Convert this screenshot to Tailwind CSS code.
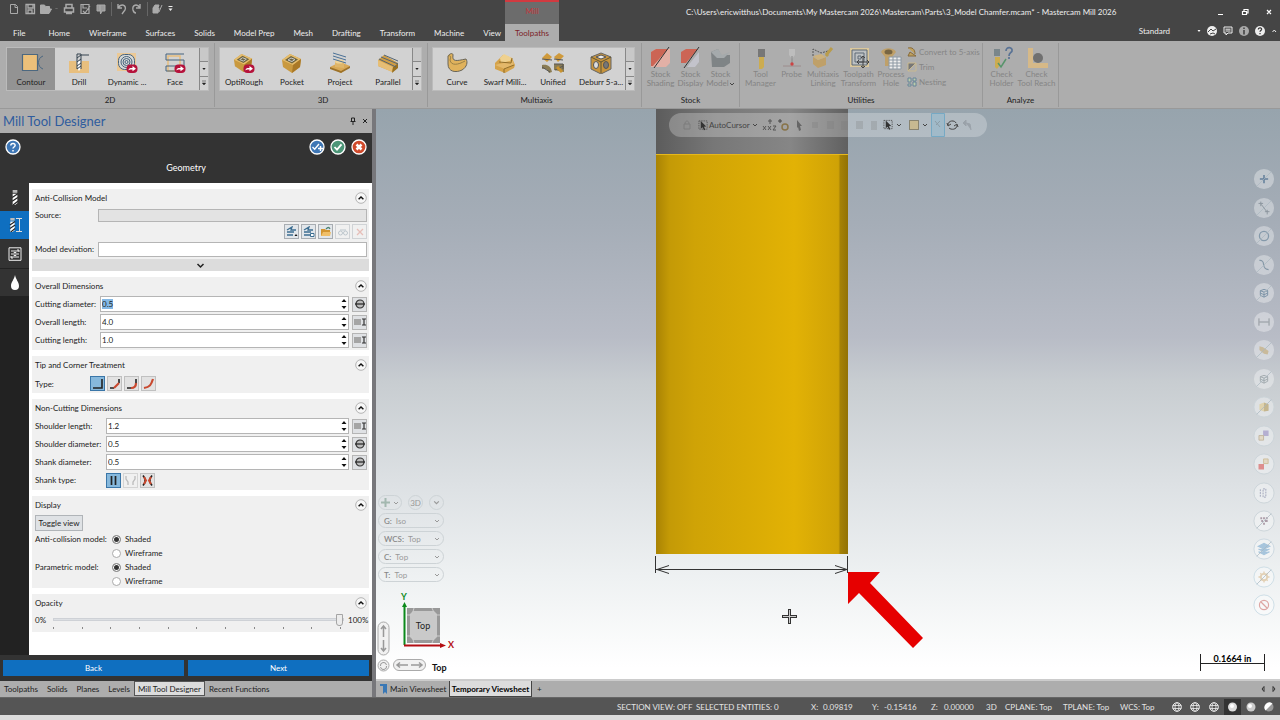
<!DOCTYPE html>
<html lang="en">
<head>
    <meta charset="UTF-8">
    <meta name="viewport" content="width=device-width, initial-scale=1.0">
    <title>Mastercam Mill 2026</title>
    <script src="https://cdn.jsdelivr.net/npm/@tailwindcss/browser@4"></script>
</head>
<body class="h-screen flex flex-col overflow-hidden bg-[#dcdcdc] font-[Lato,'Noto_Sans',sans-serif] text-[8px] leading-[10px] text-[#222]">

    <!-- shared icons -->
    <svg class="hidden">
        <symbol id="down" viewBox="0 0 6 6"><path d="M1 2l2 2 2-2" fill="none" stroke="currentColor"/></symbol>
        <symbol id="up" viewBox="0 0 12 12"><circle cx="6" cy="6" r="5.3" fill="#f7f7f7" stroke="#999" stroke-width=".7"/><path d="M3.600 7.200L6 5l2.400 2.200" fill="none" stroke="#111" stroke-width="1.500"/></symbol>
        <symbol id="caret" viewBox="0 0 6 6"><path d="M1.300 2h3.400L3 4z" fill="currentColor"/></symbol>
        <symbol id="more" viewBox="0 0 6 6"><path d="M1 1h4M1.300 3h3.400L3 5z" fill="currentColor" stroke="currentColor" stroke-width=".5"/></symbol>
        <symbol id="spin" viewBox="0 0 6 14"><path d="M.5 5L3 2l2.500 3zM.5 9L3 12l2.500-3z" fill="#111"/></symbol>
        <symbol id="diameter" viewBox="0 0 12 12"><circle cx="6" cy="6" r="4" fill="#bbb" stroke="#333" stroke-width="1.200"/><path d="M1 6h10" stroke="#222" stroke-width="1.200"/></symbol>
        <symbol id="length" viewBox="0 0 12 12"><path d="M0 3h7v6H0z" fill="#a5a5a5"/><path d="M8 3h4M8 9h4M10 3v6" stroke="#333" stroke-width="1.200"/></symbol>
        <symbol id="badge" viewBox="0 0 12 10"><rect x=".5" y=".5" width="11" height="8.500" rx="4" fill="#b5123b"/><path d="M2.500 6.500c0-2 1-2.500 4-2.500V2l3.500 2.700L6.500 7.300V5.500c-2 0-3-.2-4 1z" fill="#fff"/></symbol>
        <symbol id="arrowcursor" viewBox="0 0 12 12"><path d="M1 1h9v9H1z" fill="none" stroke="#555" stroke-dasharray="1.500 1"/><path d="M3 1l6 6-2.500.3L8 10.500l-1.500.7L5 8 3 9.500z" fill="#333"/></symbol>
        <symbol id="bit" viewBox="0 0 12 16"><path d="M3.500 0h5v3h-5z" fill="#bbb"/><path d="M3.500 4h5v10l-2.500 2h-2.500z" fill="#fff"/><path d="M3 8l6-4M3 12l6-4M4 16l5-4" stroke="#222" stroke-width="1.300"/></symbol>
        <symbol id="box" viewBox="0 0 22 22"><path d="M1 8l8-6 11 5-1 8-8 6-9-6z" fill="#c9993f"/><path d="M1 8l8-6 11 5-8 6z" fill="#e6bd6c"/><path d="M4 8l6-4 7 3.500-6 4z" fill="#6e6540"/><path d="M7 8l3-2 4 1.500-3 2z" fill="none" stroke="#ccc"/><path d="M12 13l8-6-1 8-8 6z" fill="#a97826"/></symbol>
        <symbol id="globe" viewBox="0 0 12 12"><circle cx="6" cy="6" r="4.300" fill="none" stroke="#eee"/><ellipse cx="6" cy="6" rx="2" ry="4.300" fill="none" stroke="#eee" stroke-width=".8"/><path d="M1.700 4.500h8.600M1.700 7.500h8.600" stroke="#eee" stroke-width=".8"/></symbol>
        <symbol id="cube" viewBox="0 0 12 12"><path d="M2 3.500L6 2l4 1.500v5L6 10.500l-4-2zM2 3.500l4 1.500 4-1.500M6 5v5.500M2 6l4 2 4-2" fill="none" stroke="currentColor"/></symbol>
        <symbol id="slash" viewBox="0 0 24 24"><path d="M4 20L20 4" stroke="#aab6be" stroke-width=".8"/></symbol>
    </svg>

    <header class="shrink-0">
        <div class="h-[41px] bg-[#454545] text-[#eee] flex justify-between">
            <div class="w-[505px] shrink-0 flex flex-col">
                <div class="h-[24px] flex items-start">
                    <svg class="w-[180px] h-[18px] ml-1" viewBox="0 0 180 18" fill="none" stroke="#aaa">
                        <path d="M6.500 4.500h5l2 2v7h-7zM11 4.500v3h3"/>
                        <path d="M22 4.500h8.500v9H22zM24 5v3h5V5M24 13v-3h4v3" stroke-width="1.300"/>
                        <path d="M36.500 5h4l1 1.500h4V9h-6l-2 4.500h-1zM37 13.500L39.500 9h8L45 13.500z" fill="#aaa"/><path d="M51.500 8l1 1 1-1" stroke="#777"/>
                        <path d="M62 8V4.500h6V8M60.500 8h9v4h-9zM62 13.500h6" stroke-width="1.500"/>
                        <path d="M77 4.500h8v9h-8zM79 5v3h4M79 11l2 2 5-7" stroke-width="1.200"/>
                        <path d="M93 5h3v6h-3zM96 5h5v6h-3l-1.500 3z" fill="#999"/>
                        <path d="M107.500 2v14M143.500 2v14" stroke="#666"/>
                        <path d="M114 4v4h4M114 8c3-5 9-3 7 2l-3 4M136 4v4h-4M136 8c-3-5-8-3-7 2 .5 2 2 3 3 3" stroke-width="1.400"/>
                        <path d="M149 8l2-3h4l-1 3zM149 8v5h5l1-5M155 12l3-7" fill="#aaa"/>
                        <path d="M164.500 6.500h4" stroke="#eee"/><path d="M164.500 8.500h4l-2 2.500z" fill="#eee" stroke="none"/>
                    </svg>
                </div>
                <nav class="flex h-[17px] items-center pl-[13px] gap-[19px] whitespace-nowrap">
                    <a href="#" class="mr-[4px]">File</a><a href="#">Home</a><a href="#">Wireframe</a><a href="#">Surfaces</a><a href="#">Solids</a><a href="#">Model Prep</a><a href="#">Mesh</a><a href="#">Drafting</a><a href="#">Transform</a><a href="#">Machine</a><a href="#">View</a>
                </nav>
            </div>
            <div class="w-[54px] mr-auto flex flex-col text-center">
                <div class="h-[24px] bg-[#6c6c6c] border-t-2 border-[#d13a40] text-[#c8383e] pt-[4px]">Mill</div>
                <a href="#" class="h-[17px] bg-[#adadad] text-[#7b2227] pt-[4px]">Toolpaths</a>
            </div>
            <div class="w-[594px] flex flex-col">
                <div class="h-[23px] flex items-center justify-between pr-2">
                    <span class="whitespace-nowrap">C:\Users\ericwitthus\Documents\My Mastercam 2026\Mastercam\Parts\3_Model Chamfer.mcam* - Mastercam Mill 2026</span>
                    <svg class="w-[56px] h-[10px]" viewBox="0 0 56 10" fill="none" stroke="#fff"><path d="M2 7.500h5M26.500 4.500h4v3h-4zM28 4.500V2.500h4v3.500h-1M51 3l4 4M55 3l-4 4" stroke-width="1.200"/></svg>
                </div>
                <div class="flex items-center justify-end h-[16px]">
                    <span class="mr-6">Standard</span>
                    <svg class="w-[86px] h-[14px]" viewBox="0 0 86 14">
                        <path d="M3.500 6h3L5 8z" fill="#fff"/>
                        <circle cx="18" cy="7" r="5" fill="#eee"/><path d="M14 8l3-3 2 2 3-2M16 10l3-1 2 1" stroke="#444" fill="none"/>
                        <path d="M30 3h8v6h-4l-2 2V9h-2zM31.500 5.200h5M31.500 7h5" fill="none" stroke="#eee"/>
                        <circle cx="50" cy="7" r="5" fill="#aaa"/><path d="M50 3.500v1.500M50 6v4.500" stroke="#444" stroke-width="1.600"/>
                        <circle cx="66" cy="7" r="5" fill="#eee"/><path d="M64.300 5.500c0-2.500 3.800-2 3.300 0-.3 1-1.600 1-1.600 2.300M66 9v1.300" fill="none" stroke="#333" stroke-width="1.200"/>
                        <path d="M78.500 8l1.800-2L82 8" fill="none" stroke="#eee"/>
                    </svg>
                </div>
            </div>
        </div>

        <!-- ribbon -->
        <div class="h-[68px] bg-[#adadad] border-b border-[#999] flex pt-[2px] pb-[1px] text-center">
            <section class="w-[215px] shrink-0 border-r border-[#999] pl-[6px] pt-1">
                <div class="w-[203px] h-[44px] flex bg-[#d2d2d2] border border-[#bbb]">
                    <button class="w-[48px] bg-[#939393] flex flex-col items-center pt-[4px] whitespace-nowrap"><svg class="w-[26px] h-[22px] shrink-0 mb-[3px]" viewBox="0 0 26 22"><path d="M4.500 2.500h15v16h-15z" fill="#ecc07a" stroke="#4c6880" stroke-width="1.200"/><path d="M25 4c-6 2-6 11 0 13" fill="none" stroke="#4c6880"/></svg>Contour</button>
                    <button class="w-[48px] flex flex-col items-center pt-[4px] whitespace-nowrap"><svg class="w-[26px] h-[22px] shrink-0 mb-[3px]" viewBox="0 0 26 22"><path d="M3 9h7l3 9 3-9h7v12H3z" fill="#e8bf7e"/><path d="M11 9h4v7l-2 3-2-3z" fill="#fff"/><path d="M11 2h4v15M11 2v15M11 6l4-3M11 10l4-3M11 14l4-3M11 17l4-3M15 3h8" stroke="#34434f" fill="none"/></svg>Drill</button>
                    <button class="w-[48px] flex flex-col items-center pt-[4px] whitespace-nowrap"><svg class="w-[26px] h-[22px] shrink-0 mb-[3px]" viewBox="0 0 26 22"><path d="M3 1h19v18H3z" fill="#ecc995"/><g fill="none" stroke="#46627c"><rect x="4.500" y="2.500" width="16" height="15" rx="6" fill="#d6d9d8"/><circle cx="12.500" cy="10" r="5.500"/><circle cx="12.500" cy="10" r="3.500"/><circle cx="12.500" cy="10" r="1.500"/></g><use href="#badge" x="12" y="12" width="12" height="10"/></svg>Dynamic ...</button>
                    <button class="w-[48px] flex flex-col items-center pt-[4px] whitespace-nowrap"><svg class="w-[26px] h-[22px] shrink-0 mb-[3px]" viewBox="0 0 26 22"><path d="M6 4h12v15H6z" fill="none" stroke="#e8bf7e" stroke-width="1.500"/><path d="M22 2H4v6h18v6H4v5h10" fill="none" stroke="#46627c"/><use href="#badge" x="12" y="12" width="12" height="10"/></svg>Face</button>
                    <div class="flex-1 flex flex-col border-l border-[#888]"><button class="flex-1 bg-[#c8c8c8]"></button><button class="flex-1 border-y border-[#888] flex justify-center items-center"><svg class="size-[6px]"><use href="#caret"/></svg></button><button class="flex-1 flex justify-center items-center"><svg class="size-[6px]"><use href="#more"/></svg></button></div>
                </div>
                <h3 class="mt-[4px]">2D</h3>
            </section>
            <section class="w-[213px] shrink-0 border-r border-[#999] pl-[4px] pt-1">
                <div class="w-[203px] h-[44px] flex bg-[#d2d2d2] border border-[#bbb]">
                    <button class="w-[48px] flex flex-col items-center pt-[4px] whitespace-nowrap"><svg class="w-[26px] h-[22px] shrink-0 mb-[3px]" viewBox="0 0 26 22"><use href="#box" x="2" y="0" width="21" height="21"/><use href="#badge" x="12" y="12" width="12" height="10"/></svg>OptiRough</button>
                    <button class="w-[48px] flex flex-col items-center pt-[4px] whitespace-nowrap"><svg class="w-[26px] h-[22px] shrink-0 mb-[3px]" viewBox="0 0 26 22"><use href="#box" x="2" y="0" width="22" height="22"/></svg>Pocket</button>
                    <button class="w-[48px] flex flex-col items-center pt-[4px] whitespace-nowrap"><svg class="w-[26px] h-[22px] shrink-0 mb-[3px]" viewBox="0 0 26 22"><path d="M3 15l10-5 10 4-9 7z" fill="#d9a956"/><path d="M3 15l11 4v2L3 17zM14 19l9-5v2l-9 5z" fill="#9d7229"/><path d="M8 9l9 1v6l-9-1z" fill="#dfb66a"/><ellipse cx="12.500" cy="9.500" rx="4.500" ry="2" fill="#f0d396"/><path d="M6 1l13 4M6 4l13 4M6 7l13 4" stroke="#4b7196"/></svg>Project</button>
                    <button class="w-[48px] flex flex-col items-center pt-[4px] whitespace-nowrap"><svg class="w-[26px] h-[22px] shrink-0 mb-[3px]" viewBox="0 0 26 22"><path d="M3 8l6-5 14 8-4 3-1 6L3 14z" fill="#cf9d45"/><path d="M3 8l15 7-1 5L3 14z" fill="#e6be75"/><path d="M18 15l5-4v5l-6 5z" fill="#99701f"/><path d="M4 7l17 8M6 5l17 7M9 3l14 6" stroke="#566570"/></svg>Parallel</button>
                    <div class="flex-1 flex flex-col border-l border-[#888]"><button class="flex-1 bg-[#c8c8c8]"></button><button class="flex-1 border-y border-[#888] flex justify-center items-center"><svg class="size-[6px]"><use href="#caret"/></svg></button><button class="flex-1 flex justify-center items-center"><svg class="size-[6px]"><use href="#more"/></svg></button></div>
                </div>
                <h3 class="mt-[4px]">3D</h3>
            </section>
            <section class="w-[214px] shrink-0 border-r border-[#999] pl-[4px] pt-1">
                <div class="w-[203px] h-[44px] flex bg-[#d2d2d2] border border-[#bbb]">
                    <button class="w-[48px] flex flex-col items-center pt-[4px] whitespace-nowrap"><svg class="w-[26px] h-[22px] shrink-0 mb-[3px]" viewBox="0 0 26 22"><path d="M4 4c2-3 5-3 5-1-1 7 3 6 13 4 2 3 1 8-4 11-6 3-14 2-14-6z" fill="#e0b25c" stroke="#68655a"/><path d="M4 4c3-1 3 1 2 4 1 6 8 5 15 1" fill="none" stroke="#998047"/></svg>Curve</button>
                    <button class="w-[48px] flex flex-col items-center pt-[4px] whitespace-nowrap"><svg class="w-[26px] h-[22px] shrink-0 mb-[3px]" viewBox="0 0 26 22"><path d="M3 11l8-8 9 3 3 7-1 3-9 5-10-4z" fill="#d5a34b"/><path d="M8 6l4-4 8 4-2 3-9 2z" fill="#efd18f"/><path d="M7 12l14-3 1 4-9 4-10-4z" fill="#e3b86a"/><path d="M7 10l12 1 1-5M12 21v-4l10-4" fill="none" stroke="#906d29"/></svg>Swarf Milli...</button>
                    <button class="w-[48px] flex flex-col items-center pt-[4px] whitespace-nowrap"><svg class="w-[26px] h-[22px] shrink-0 mb-[3px]" viewBox="0 0 26 22"><path d="M2 6l5-5 5 4-5 5zM14 5l5-4 5 3-6 6z" fill="#cf9a3c"/><path d="M2 13c5-1 9 1 10 7l-3 1c-1-4-4-5-7-4zM14 12h10v8l-10-2z" fill="#8a7c54"/><path d="M2 7l10 1M14 7l9 1M2 15l8 5M14 12h9v5M15 18l8-4" stroke="#555" fill="none"/><path d="M17 15l5 5" stroke="#c9932f" stroke-width="3"/></svg>Unified</button>
                    <button class="w-[48px] flex flex-col items-center pt-[4px] whitespace-nowrap"><svg class="w-[26px] h-[22px] shrink-0 mb-[3px]" viewBox="0 0 26 22"><path d="M3 5l10-4 10 4v12l-10 5-10-5z" fill="#c7943d" stroke="#666"/><path d="M3 5l10 5 10-5M13 10v11" stroke="#5d5537" fill="none"/><path d="M8 5l5-2 5 2-5 2z" fill="#eee" stroke="#555"/><ellipse cx="8" cy="13" rx="2.500" ry="3.500" fill="#ddd" stroke="#555"/><ellipse cx="18" cy="13" rx="2.500" ry="3.500" fill="#777" stroke="#555"/></svg>Deburr 5-a...</button>
                    <div class="flex-1 flex flex-col border-l border-[#888]"><button class="flex-1 bg-[#c8c8c8]"></button><button class="flex-1 border-y border-[#888] flex justify-center items-center"><svg class="size-[6px]"><use href="#caret"/></svg></button><button class="flex-1 flex justify-center items-center"><svg class="size-[6px]"><use href="#more"/></svg></button></div>
                </div>
                <h3 class="mt-[4px]">Multiaxis</h3>
            </section>
            <section class="w-[98px] shrink-0 border-r border-[#999] pt-[3px] flex flex-col">
                <div class="h-[49px] flex justify-center text-[#828282] leading-[9px]">
                    <button class="w-[30px] flex flex-col items-center" disabled><svg class="size-[24px] shrink-0" viewBox="0 0 24 24"><path d="M2 6l5-3h14v14l-4 4H2z" fill="#e2b0a6"/><path d="M2 6l5-3h12L4 20H2z" fill="#cc6555"/><path d="M5 22L20 1" stroke="#333"/></svg>Stock Shading</button>
                    <button class="w-[30px] flex flex-col items-center" disabled><svg class="size-[24px] shrink-0" viewBox="0 0 24 24"><path d="M20 6v10l-4 5H8z" fill="#c3c3cb"/><path d="M2 6l5-3h12L7 17H2z" fill="#cc6555"/><path d="M5 22L20 1" stroke="#333"/></svg>Stock Display</button>
                    <button class="w-[30px] flex flex-col items-center" disabled><svg class="size-[24px] shrink-0" viewBox="0 0 24 24"><path d="M2 6l7-3 3 6h9v8l-6 4H3z" fill="#7f8486"/><path d="M2 6l7-3 4 6 8-3-6 6H8z" fill="#a5aaac"/></svg>Stock<span class="flex items-center">Model<svg class="size-[6px] text-[#444]"><use href="#down"/></svg></span></button>
                </div>
                <h3>Stock</h3>
            </section>
            <section class="w-[243px] shrink-0 border-r border-[#999] pt-[3px] flex flex-col">
                <div class="h-[49px] flex text-[#858585] leading-[9px] pl-[3px]">
                    <button class="w-[35px] flex flex-col items-center" disabled><svg class="size-[24px] shrink-0" viewBox="0 0 24 24"><path d="M9 3h7v8H9z" fill="#777"/><path d="M10 11h5v10l-2 2h-3z" fill="#ccac50"/></svg>Tool Manager</button>
                    <button class="w-[27px] flex flex-col items-center" disabled><svg class="size-[24px] shrink-0" viewBox="0 0 24 24"><path d="M9 3h6v6l-3 4-3-4z" fill="#bdbdbd"/><path d="M12 10v7" stroke="#888"/><path d="M3 20h18" stroke="#9c8c8c"/><circle cx="12" cy="18" r="1.700" fill="#c44"/></svg>Probe</button>
                    <button class="w-[36px] flex flex-col items-center" disabled><svg class="size-[24px] shrink-0" viewBox="0 0 24 24"><path d="M2 11l5 3v8l-5-4zM7 14l8-3v8l-8 3z" fill="#bfa069"/><path d="M2 10l5 4 8-3-5-3z" fill="#cdb27e"/><path d="M2 10V3l8 4 7-2" fill="none" stroke="#555" stroke-dasharray="2 1"/><path d="M15 9l6-7M15 10l2-2" stroke="#b99c4c" stroke-width="3"/></svg>Multiaxis Linking</button>
                    <button class="w-[35px] flex flex-col items-center" disabled><svg class="size-[24px] shrink-0" viewBox="0 0 24 24"><path d="M3 2h19v19H3z" fill="#dbc89c"/><path d="M5 4h15v15H5zM8 7h9v9H8zM11 10h3v3h-3z" fill="#bcc0c2" stroke="#5e6b76"/><path d="M16 10v12M10 16h12M14 12l2-2 2 2M14 20l2 2 2-2M12 14l-2 2 2 2M20 14l2 2-2 2" stroke="#444" fill="none"/></svg>Toolpath Transform</button>
                    <button class="w-[30px] flex flex-col items-center" disabled><svg class="size-[24px] shrink-0" viewBox="0 0 24 24"><path d="M2 6c2-5 13-5 15 0l-4 5v9H6v-9z" fill="#bfa069"/><ellipse cx="9.500" cy="6" rx="4" ry="2.500" fill="#776543"/><path d="M10 11h12v12H10z" fill="#eee"/><path d="M10 11h12v12H10zM10 14h12M10 17h12M10 20h12M14 11v12M18 11v12" stroke="#8c98a3" fill="none"/></svg>Process Hole</button>
                    <div class="flex flex-col gap-[5px] pt-[1px] pl-[1px]">
                        <button class="flex items-center gap-[2px] whitespace-nowrap" disabled><svg class="size-[10px]" viewBox="0 0 10 10"><path d="M1 1c4-1 7 1 7 6M1 9l2-4 6 4z" fill="#c0a15f" stroke="#876b3b"/></svg>Convert to 5-axis</button>
                        <button class="flex items-center gap-[2px] whitespace-nowrap" disabled><svg class="size-[10px]" viewBox="0 0 10 10"><path d="M1 1h8L1 9z" fill="#777"/><path d="M1 1h8v8H1zM1 9l8-8" stroke="#c9b98f" fill="none"/></svg>Trim</button>
                        <button class="flex items-center gap-[2px] whitespace-nowrap" disabled><svg class="size-[10px]" viewBox="0 0 10 10"><path d="M1 1h3v4H1zM1 7h3v2H1zM6 1h3v3H6zM6 5h3v4H6z" fill="#bca" stroke="#66839a"/></svg>Nesting</button>
                    </div>
                </div>
                <h3>Utilities</h3>
            </section>
            <section class="w-[76px] shrink-0 border-r border-[#999] pt-[3px] flex flex-col">
                <div class="h-[49px] flex justify-center text-[#858585] leading-[9px]">
                    <button class="w-[32px] flex flex-col items-center" disabled><svg class="size-[24px] shrink-0" viewBox="0 0 24 24"><path d="M4 3h6v7H4z" fill="#7a868b"/><path d="M5 11h5v8l-3 4-2-2z" fill="#ccac50"/><path d="M8 17l3 4 5-8" stroke="#57946b" fill="none" stroke-width="1.500"/><path d="M16 5c0-5 7-4 6 0-1 2-3 2-3 5M19 11v2" stroke="#5a7395" stroke-width="1.700" fill="none"/></svg>Check Holder</button>
                    <button class="w-[38px] flex flex-col items-center whitespace-nowrap" disabled><svg class="size-[24px] shrink-0" viewBox="0 0 24 24"><path d="M3 2h5v15h15v5H3z" fill="#d6b988"/><circle cx="13" cy="12" r="5" fill="#707070"/></svg>Check<br>Tool Reach</button>
                </div>
                <h3>Analyze</h3>
            </section>
        </div>
    </header>

    <main class="flex-1 flex min-h-0">
        <!-- tool designer panel -->
        <aside class="w-[376px] shrink-0 flex flex-col bg-[#adadad] border-r-4 border-[#77777b]">
            <div class="h-[24px] shrink-0 flex items-center justify-between pl-[3px] pr-[3px]">
                <h1 class="text-[13px] leading-[18px] text-[#2f5c9e]">Mill Tool Designer</h1>
                <svg class="w-[20px] h-[8px]" viewBox="0 0 20 8" fill="none" stroke="#222"><path d="M2.500 1v3.500M5.500 1v3.500M2.500 1h3M1.500 4.500h5M4 5v3M14 2l4 4M18 2l-4 4"/></svg>
            </div>
            <div class="h-[50px] shrink-0 bg-[#333] px-[5px] pt-[6px]">
                <div class="flex gap-[5px]">
                    <button class="mr-auto" aria-label="Help"><svg class="size-[16px]" viewBox="0 0 16 16"><circle cx="8" cy="8" r="7" fill="#3f77b5" stroke="#fff" stroke-width="1.300"/><path d="M5.800 6.500c0-3 4.600-2.500 4.300 0C10 8 8 8 8 9.500M8 11v1.500" fill="none" stroke="#fff" stroke-width="1.500"/></svg></button>
                    <button aria-label="OK and create new"><svg class="size-[16px]" viewBox="0 0 16 16"><circle cx="8" cy="8" r="7" fill="#3f77b5" stroke="#fff" stroke-width="1.300"/><path d="M3.500 8l2.200 2.200L10 5M11.500 7v5M9 9.500h5" fill="none" stroke="#fff" stroke-width="1.400"/></svg></button>
                    <button aria-label="OK"><svg class="size-[16px]" viewBox="0 0 16 16"><circle cx="8" cy="8" r="7" fill="#4d9678" stroke="#fff" stroke-width="1.300"/><path d="M4.500 8l2.500 2.700 4.500-5.400" fill="none" stroke="#fff" stroke-width="1.800"/></svg></button>
                    <button aria-label="Cancel"><svg class="size-[16px]" viewBox="0 0 16 16"><circle cx="8" cy="8" r="7" fill="#cf4a2c" stroke="#fff" stroke-width="1.300"/><path d="M5.500 5.500l5 5M10.500 5.500l-5 5" stroke="#fff" stroke-width="2.500"/></svg></button>
                </div>
                <h2 class="text-center text-white text-[9px] leading-[12px] mt-[7px]">Geometry</h2>
            </div>
            <div class="flex-1 flex min-h-0">
                <nav class="w-[29px] bg-[#222] flex flex-col">
                    <button class="h-[28px] bg-[#333] flex justify-center items-center" aria-label="Tool type"><svg class="w-[12px] h-[15px]"><use href="#bit"/></svg></button>
                    <button class="h-[28px] bg-[#0f6fc0] flex justify-center items-center" aria-label="Geometry"><svg class="w-[14px] h-[16px]" viewBox="0 0 14 16"><use href="#bit" x="-1" y="1" width="11" height="14"/><path d="M8 1.500h6M8 14.500h6M11.500 1.500v13" stroke="#ddd" fill="none"/></svg></button>
                    <button class="h-[30px] bg-[#333] border-b border-[#222] flex justify-center items-center" aria-label="Parameters"><svg class="size-[14px]" viewBox="0 0 14 14" fill="none" stroke="#eee"><path d="M1 .8h12v12.500H1zM3 4h8M3 7h2M9 7h2M3 10h8M6 5.500h2v3H6z"/><path d="M9 3h2v2M3 9v2h2"/></svg></button>
                    <button class="h-[27px] bg-[#333] flex justify-center items-center" aria-label="Coolant"><svg class="w-[8px] h-[16px]" viewBox="0 0 8 16"><path d="M4 0c1 5 4 7 4 11a4 4 0 01-8 0c0-4 3-6 4-11z" fill="#fff"/></svg></button>
                </nav>
                <form class="flex-1 bg-white flex flex-col gap-[6px] pt-[6px] pl-[3px] pr-[3px]">
                    <section class="bg-[#f0f0f0]">
                        <div class="h-[17px] flex items-center justify-between pl-[3px] pr-[2px]"><h3>Anti-Collision Model</h3><svg class="size-[12px]"><use href="#up"/></svg></div>
                        <div class="h-[18px] flex items-center pl-[3px] pr-[2px]"><label for="source" class="w-[63px]">Source:</label><input id="source" disabled class="flex-1 h-[13px] bg-[#e3e3e3] border border-[#b5b5b5]"></div>
                        <div class="flex justify-end gap-[2px] pr-[2px]">
                            <button type="button" aria-label="Add from level" class="size-[15px] bg-[#e2e6ea] border border-[#a8adb2] flex justify-center items-center"><svg class="size-[12px]" viewBox="0 0 12 12"><path d="M1 4l5-3-1 3h5M1 6h7M1 9h6" fill="none" stroke="#3d6e91" stroke-width="1.300"/><path d="M8.500 10l1.500-2 1.500 2z" fill="#111"/></svg></button>
                            <button type="button" aria-label="Add from screen" class="size-[15px] bg-[#e2e6ea] border border-[#a8adb2] flex justify-center items-center"><svg class="size-[12px]" viewBox="0 0 12 12"><path d="M1 4l5-3-1 3h5M1 6h7M1 9h6" fill="none" stroke="#3d6e91" stroke-width="1.300"/><path d="M7.500 7.500h3.500v3H7.500z" fill="#fff" stroke="#3d6e91"/></svg></button>
                            <button type="button" aria-label="Open file" class="size-[15px] bg-[#e2e6ea] border border-[#a8adb2] flex justify-center items-center"><svg class="size-[12px]" viewBox="0 0 12 12"><path d="M1 3h4l1 1h4v6H1z" fill="#d39531"/><path d="M3 6h8l-1 4H1z" fill="#f0bf69"/><path d="M6 3c2-2 3-2 4 0" fill="none" stroke="#4b8270" stroke-width="1.300"/></svg></button>
                            <button type="button" aria-label="View" disabled class="size-[15px] border border-[#d0d3d6] flex justify-center items-center"><svg class="size-[12px]" viewBox="0 0 12 12" fill="none" stroke="#bdc7cd"><circle cx="3.500" cy="7" r="2"/><circle cx="8.500" cy="7" r="2"/><path d="M3 4h6"/></svg></button>
                            <button type="button" aria-label="Delete" disabled class="size-[15px] border border-[#d0d3d6] flex justify-center items-center"><svg class="size-[12px]" viewBox="0 0 12 12"><path d="M3 3l6 6M9 3L3 9" stroke="#e6beb8" stroke-width="1.300"/></svg></button>
                        </div>
                        <div class="h-[20px] flex items-center pl-[3px] pr-[2px]"><label for="deviation" class="w-[63px] whitespace-nowrap">Model deviation:</label><input id="deviation" class="flex-1 h-[15px] bg-white border border-[#b5b5b5]"></div>
                        <button type="button" aria-label="Expand" class="w-full h-[12px] bg-[#dcdcdc] flex justify-center items-center"><svg class="size-[9px]"><use href="#down"/></svg></button>
                    </section>

                    <section class="bg-[#f0f0f0] pb-[1px]">
                        <div class="h-[18px] flex items-center justify-between pl-[3px] pr-[2px]"><h3>Overall Dimensions</h3><svg class="size-[12px]"><use href="#up"/></svg></div>
                        <div class="h-[18px] flex items-center pl-[3px] pr-[2px]"><label for="cutdia" class="w-[65px] whitespace-nowrap">Cutting diameter:</label><span class="flex-1 flex h-[16px] bg-white border border-[#b5b5b5]"><input id="cutdia" value="0.5" class="flex-1 min-w-0 px-[1px] outline-none selection:bg-[#84b8e4] selection:text-[#222]"><svg class="w-[6px] h-[14px] mr-[1px]"><use href="#spin"/></svg></span><button type="button" aria-label="Measure" class="size-[15px] ml-[3px] bg-[#dfe1e4] border border-[#b5b5b5] flex justify-center items-center"><svg class="size-[12px]"><use href="#diameter"/></svg></button></div>
                        <div class="h-[18px] flex items-center pl-[3px] pr-[2px]"><label for="overlen" class="w-[65px] whitespace-nowrap">Overall length:</label><span class="flex-1 flex h-[16px] bg-white border border-[#b5b5b5]"><input id="overlen" value="4.0" class="flex-1 min-w-0 px-[1px] outline-none"><svg class="w-[6px] h-[14px] mr-[1px]"><use href="#spin"/></svg></span><button type="button" aria-label="Measure" class="size-[15px] ml-[3px] bg-[#dfe1e4] border border-[#b5b5b5] flex justify-center items-center"><svg class="size-[12px]"><use href="#length"/></svg></button></div>
                        <div class="h-[18px] flex items-center pl-[3px] pr-[2px]"><label for="cutlen" class="w-[65px] whitespace-nowrap">Cutting length:</label><span class="flex-1 flex h-[16px] bg-white border border-[#b5b5b5]"><input id="cutlen" value="1.0" class="flex-1 min-w-0 px-[1px] outline-none"><svg class="w-[6px] h-[14px] mr-[1px]"><use href="#spin"/></svg></span><button type="button" aria-label="Measure" class="size-[15px] ml-[3px] bg-[#dfe1e4] border border-[#b5b5b5] flex justify-center items-center"><svg class="size-[12px]"><use href="#length"/></svg></button></div>
                    </section>

                    <section class="bg-[#f0f0f0]">
                        <div class="h-[18px] flex items-center justify-between pl-[3px] pr-[2px]"><h3>Tip and Corner Treatment</h3><svg class="size-[12px]"><use href="#up"/></svg></div>
                        <div class="h-[19px] flex items-center gap-[2px] pl-[3px] pr-[2px]"><span class="w-[53px]">Type:</span>
                            <button type="button" aria-label="Square" class="size-[15px] bg-[#86b8dc] border border-[#3a76a8]"><svg viewBox="0 0 13 13"><path d="M2 11h9V2" fill="none" stroke="#222" stroke-width="1.600"/></svg></button>
                            <button type="button" aria-label="Chamfer" class="size-[15px] bg-[#e2e2e2] border border-[#c0c0c0]"><svg viewBox="0 0 13 13" fill="none"><path d="M2 11h4M11 2v4" stroke="#222" stroke-width="1.600"/><path d="M6 11l5-5" stroke="#c9492f" stroke-width="2.200"/></svg></button>
                            <button type="button" aria-label="Corner radius" class="size-[15px] bg-[#e2e2e2] border border-[#c0c0c0]"><svg viewBox="0 0 13 13" fill="none"><path d="M2 11h4M11 2v4" stroke="#222" stroke-width="1.600"/><path d="M6 11c3 0 5-2 5-5" stroke="#c9492f" stroke-width="2.200"/></svg></button>
                            <button type="button" aria-label="Full radius" class="size-[15px] bg-[#e2e2e2] border border-[#c0c0c0]"><svg viewBox="0 0 13 13" fill="none"><path d="M2 11c6-1 7-3 9-9" stroke="#c9492f" stroke-width="2.200"/></svg></button>
                        </div>
                    </section>

                    <section class="bg-[#f0f0f0] pb-[1px]">
                        <div class="h-[18px] flex items-center justify-between pl-[3px] pr-[2px]"><h3>Non-Cutting Dimensions</h3><svg class="size-[12px]"><use href="#up"/></svg></div>
                        <div class="h-[18px] flex items-center pl-[3px] pr-[2px]"><label for="shlen" class="w-[71px] whitespace-nowrap">Shoulder length:</label><span class="flex-1 flex h-[16px] bg-white border border-[#b5b5b5]"><input id="shlen" value="1.2" class="flex-1 min-w-0 px-[1px] outline-none"><svg class="w-[6px] h-[14px] mr-[1px]"><use href="#spin"/></svg></span><button type="button" aria-label="Measure" class="size-[15px] ml-[3px] bg-[#dfe1e4] border border-[#b5b5b5] flex justify-center items-center"><svg class="size-[12px]"><use href="#length"/></svg></button></div>
                        <div class="h-[18px] flex items-center pl-[3px] pr-[2px]"><label for="shdia" class="w-[71px] whitespace-nowrap">Shoulder diameter:</label><span class="flex-1 flex h-[16px] bg-white border border-[#b5b5b5]"><input id="shdia" value="0.5" class="flex-1 min-w-0 px-[1px] outline-none"><svg class="w-[6px] h-[14px] mr-[1px]"><use href="#spin"/></svg></span><button type="button" aria-label="Measure" class="size-[15px] ml-[3px] bg-[#dfe1e4] border border-[#b5b5b5] flex justify-center items-center"><svg class="size-[12px]"><use href="#diameter"/></svg></button></div>
                        <div class="h-[18px] flex items-center pl-[3px] pr-[2px]"><label for="shankdia" class="w-[71px] whitespace-nowrap">Shank diameter:</label><span class="flex-1 flex h-[16px] bg-white border border-[#b5b5b5]"><input id="shankdia" value="0.5" class="flex-1 min-w-0 px-[1px] outline-none"><svg class="w-[6px] h-[14px] mr-[1px]"><use href="#spin"/></svg></span><button type="button" aria-label="Measure" class="size-[15px] ml-[3px] bg-[#dfe1e4] border border-[#b5b5b5] flex justify-center items-center"><svg class="size-[12px]"><use href="#diameter"/></svg></button></div>
                        <div class="h-[18px] flex items-center gap-[2px] pl-[3px] pr-[2px]"><span class="w-[69px]">Shank type:</span>
                            <button type="button" aria-label="Straight" class="size-[15px] bg-[#86b8dc] border border-[#3a76a8]"><svg viewBox="0 0 13 13"><path d="M4.500 2v9M8.500 2v9" stroke="#222" stroke-width="1.700"/></svg></button>
                            <button type="button" aria-label="Tapered" disabled class="size-[15px] border border-[#d4d4d4]"><svg viewBox="0 0 13 13" fill="none" stroke="#bbb" stroke-width="1.300"><path d="M2 2v3l2 3v3M11 2v3L9 8v3"/></svg></button>
                            <button type="button" aria-label="Reduced" class="size-[15px] bg-[#e2e2e2] border border-[#c0c0c0]"><svg viewBox="0 0 13 13" fill="none"><path d="M2 1.500l2 3v4l-2 3M11 1.500l-2 3v4l2 3" stroke="#222" stroke-width="1.600"/><path d="M3 3l2 3.500L3 10M10 3L8 6.500l2 3.500" stroke="#c9492f" stroke-width="2"/></svg></button>
                        </div>
                    </section>

                    <section class="bg-[#f0f0f0]">
                        <div class="h-[18px] flex items-center justify-between pl-[3px] pr-[2px]"><h3>Display</h3><svg class="size-[12px]"><use href="#up"/></svg></div>
                        <div class="h-[18px] flex items-center px-[3px]"><button type="button" class="h-[16px] w-[48px] border border-[#b0b4b8] bg-[#dfe2e5] whitespace-nowrap">Toggle view</button></div>
                        <div class="grid grid-cols-[77px_1fr] auto-rows-[14px] items-center px-[3px]">
                            <span>Anti-collision model:</span>
                            <label class="flex items-center gap-1"><input type="radio" name="anti" checked class="appearance-none size-[9px] rounded-full bg-white border border-[#999] checked:bg-[#333] checked:shadow-[inset_0_0_0_1px_#fff]">Shaded</label>
                            <span></span>
                            <label class="flex items-center gap-1"><input type="radio" name="anti" class="appearance-none size-[9px] rounded-full bg-white border border-[#aaa]">Wireframe</label>
                            <span>Parametric model:</span>
                            <label class="flex items-center gap-1"><input type="radio" name="param" checked class="appearance-none size-[9px] rounded-full bg-white border border-[#999] checked:bg-[#333] checked:shadow-[inset_0_0_0_1px_#fff]">Shaded</label>
                            <span></span>
                            <label class="flex items-center gap-1"><input type="radio" name="param" class="appearance-none size-[9px] rounded-full bg-white border border-[#aaa]">Wireframe</label>
                        </div>
                    </section>

                    <section class="bg-[#f0f0f0]">
                        <div class="h-[18px] flex items-center justify-between pl-[3px] pr-[2px]"><label for="opacity">Opacity</label><svg class="size-[12px]"><use href="#up"/></svg></div>
                        <div class="h-[15px] flex items-center pl-[3px] pr-[2px] gap-[4px]"><span class="w-[14px]">0%</span>
                            <input id="opacity" type="range" value="100" class="appearance-none flex-1 min-w-0 h-[3px] bg-[#dde0e4] border border-[#ced1d6] [&::-webkit-slider-thumb]:appearance-none [&::-webkit-slider-thumb]:w-[7px] [&::-webkit-slider-thumb]:h-[12px] [&::-webkit-slider-thumb]:bg-[#ececec] [&::-webkit-slider-thumb]:border [&::-webkit-slider-thumb]:border-[#a5a5a5] [&::-webkit-slider-thumb]:rounded-b-[3px]">
                            <span class="w-[19px] text-right">100%</span></div>
                        <div class="h-[5px] ml-[21px] mr-[28px] flex justify-between"><i class="w-px h-[2px] bg-[#888]"></i><i class="w-px h-[2px] bg-[#888]"></i><i class="w-px h-[2px] bg-[#888]"></i><i class="w-px h-[2px] bg-[#888]"></i><i class="w-px h-[2px] bg-[#888]"></i><i class="w-px h-[2px] bg-[#888]"></i><i class="w-px h-[2px] bg-[#888]"></i><i class="w-px h-[2px] bg-[#888]"></i><i class="w-px h-[2px] bg-[#888]"></i><i class="w-px h-[2px] bg-[#888]"></i><i class="w-px h-[2px] bg-[#888]"></i></div>
                    </section>
                </form>
            </div>
            <div class="h-[26px] shrink-0 bg-[#333] flex gap-[4px] px-[3px] py-[5px] text-white">
                <button class="flex-1 bg-[#0f6fc0]">Back</button>
                <button class="flex-1 bg-[#0f6fc0]">Next</button>
            </div>
            <div class="h-[16px] shrink-0 flex items-center pl-[4px] gap-[9px] whitespace-nowrap">
                <a href="#">Toolpaths</a><a href="#">Solids</a><a href="#">Planes</a><a href="#">Levels</a>
                <a href="#" class="-mx-[5px] h-[15px] px-[3px] pt-[2px] mb-[1px] bg-[#dcdcdc] border border-[#555]">Mill Tool Designer</a>
                <a href="#">Recent Functions</a>
            </div>
        </aside>

        <section class="flex-1 min-w-0 flex flex-col">
            <!-- graphics window -->
            <div class="relative flex-1 overflow-hidden bg-[linear-gradient(#97a4ad_0%,#a5adb7_20%,#b8bcc6_40%,#c8cdd1_48%,#dde1e4_66%,#eef1f2_82%,#ffffff_98%)]">
                <svg class="absolute left-[279px] top-0 w-[275px] h-[542px]" viewBox="0 0 275 542">
                    <defs>
                        <linearGradient id="gold"><stop offset="0" stop-color="#a98304"/><stop offset=".07" stop-color="#c49a06"/><stop offset=".2" stop-color="#cfa306"/><stop offset=".45" stop-color="#d8aa05"/><stop offset=".72" stop-color="#e2b205"/><stop offset=".95" stop-color="#cfa206"/><stop offset=".96" stop-color="#a58106"/><stop offset="1" stop-color="#927205"/></linearGradient>
                        <linearGradient id="steel"><stop offset="0" stop-color="#5c5c5c"/><stop offset=".3" stop-color="#777"/><stop offset=".7" stop-color="#868686"/><stop offset="1" stop-color="#606060"/></linearGradient>
                    </defs>
                    <path d="M1 0h192v45H1z" fill="url(#steel)"/>
                    <path d="M1 45h192v400H1z" fill="url(#gold)"/>
                    <path d="M1 45.500h192" stroke="#e6b81c"/>
                    <path d="M.5 447v17M192.500 447v17M1 460.500h192M14 456.500l-12 4 12 4M180 456.500l12 4-12 4" fill="none" stroke="#333"/>
                    <path d="M193 463h32l-10 11 53 55-10 10-54-55-11 11z" fill="#e60000"/>
                    <path d="M134.500 500v15M127 507.500h15" stroke="#333" stroke-width="3"/>
                    <path d="M134.500 501v13M128 507.500h13" stroke="#ccc"/>
                </svg>

                <!-- selection bar -->
                <div class="absolute left-[293px] top-[4px] w-[318px] h-[24px] rounded-full bg-white/25 flex items-center text-[#444]">
                    <svg class="w-[11px] h-[12px] ml-[13px] opacity-30" viewBox="0 0 11 12"><path d="M2 5h6v5H2zM3 5c0-4 4-4 4 0" fill="none" stroke="#555"/></svg>
                    <svg class="size-[11px] ml-[5px]"><use href="#arrowcursor"/></svg>
                    <button class="flex items-center w-[52px] whitespace-nowrap">AutoCursor<svg class="size-[6px] ml-[2px] shrink-0"><use href="#down"/></svg></button>
                    <svg class="w-[220px] h-[24px]" viewBox="0 0 220 24">
                        <path d="M2 13l3 4M5 13l-3 4M7 13l3 4M10 13l-3 4M12 13h3l-3 4h3M7 8h4M9 6v5" stroke="#555" fill="none"/>
                        <path d="M17 8h4M19 6v4" stroke="#444"/><circle cx="24" cy="14" r="3" fill="none" stroke="#88744a" stroke-width="1.500"/>
                        <path d="M36 7l5 6h-2l1 4-2 1-1-4-1 1z" fill="#666"/>
                        <g fill="#777" opacity=".25"><path d="M51 9h6v6h-6zM66 8h7v8h-7zM80 8h7v9h-7zM95 8h7v8h-7zM110 8h6v9h-6z"/></g>
                        <use href="#arrowcursor" x="122" y="6" width="11" height="12"/><use href="#down" x="135" y="9" width="6" height="6"/>
                        <path d="M148.500 7.500h9v9h-9z" fill="#c7b991" stroke="#554c35" stroke-dasharray="1 1"/><use href="#down" x="161" y="9" width="6" height="6"/>
                        <path d="M170.500.5h13v23h-13z" fill="#95b9cd" fill-opacity=".6" stroke="#76a9c4"/><path d="M174 8l5 6M179 8l-4 4" stroke="#8d9da7"/>
                        <path d="M187 12c0-5 7-5 8-2M196 12c0 5-6 5-8 3M186 10l1 3 3-2M197 14l-1-3-3 2" fill="none" stroke="#444"/>
                        <path d="M202 10l3-3v6zM205 10l4 1 1 6" fill="#8b929a" stroke="#8b929a" opacity=".6"/>
                    </svg>
                </div>

                <!-- quick masks -->
                <div class="absolute right-[4px] top-[58px] flex flex-col gap-[4px] text-[#7890a4]">
                    <button class="size-[24px] p-[1px] mb-[1px]" aria-label="Points"><svg viewBox="0 0 24 24"><circle cx="12" cy="12" r="11" fill="#fff" fill-opacity=".35"/><path d="M7.500 12h9M12 7.500v9" stroke="#64809c" stroke-width="1.700"/><use href="#slash"/></svg></button>
                    <button class="size-[24px] p-[1px]" aria-label="Lines"><svg viewBox="0 0 24 24"><circle cx="12" cy="12" r="11" fill="#fff" fill-opacity=".35"/><path d="M6 7h5M8.500 5v5M13 16h5M15.500 14v5M9 8l6 8" stroke="#8a949c"/><use href="#slash"/></svg></button>
                    <button class="size-[24px] p-[1px] mb-[1px]" aria-label="Arcs"><svg viewBox="0 0 24 24"><circle cx="12" cy="12" r="11" fill="#fff" fill-opacity=".35"/><circle cx="12" cy="12" r="5" fill="none" stroke="#8499aa" stroke-width="1.400"/><use href="#slash"/></svg></button>
                    <button class="size-[24px] p-[1px]" aria-label="Splines"><svg viewBox="0 0 24 24"><circle cx="12" cy="12" r="11" fill="#fff" fill-opacity=".35"/><path d="M7 7c8-1 1 10 10 10" fill="none" stroke="#8497a6" stroke-width="1.300"/><use href="#slash"/></svg></button>
                    <button class="size-[24px] p-[1px] mb-[1px]" aria-label="Wireframe"><svg viewBox="0 0 24 24"><circle cx="12" cy="12" r="11" fill="#fff" fill-opacity=".35"/><use href="#cube" x="6" y="6" width="12" height="12"/><use href="#slash"/></svg></button>
                    <button class="size-[24px] p-[1px]" aria-label="Drafting"><svg viewBox="0 0 24 24"><circle cx="12" cy="12" r="11" fill="#fff" fill-opacity=".35"/><path d="M6.500 8v8M17.500 8v8M7 12h10" stroke="#8b9297"/></svg></button>
                    <button class="size-[24px] p-[1px] mb-[1px]" aria-label="Surfaces"><svg viewBox="0 0 24 24"><circle cx="12" cy="12" r="11" fill="#fff" fill-opacity=".35"/><path d="M7 8l4 1 6 4-1 4-4-1-5-4z" fill="#c9ba9b"/><use href="#slash"/></svg></button>
                    <button class="size-[24px] p-[1px]" aria-label="Solids"><svg viewBox="0 0 24 24" class="text-[#a0a9ad]"><circle cx="12" cy="12" r="11" fill="#fff" fill-opacity=".35"/><use href="#cube" x="6" y="6" width="12" height="12"/><use href="#slash"/></svg></button>
                    <button class="size-[24px] p-[1px] mb-[1px]" aria-label="Solid bodies"><svg viewBox="0 0 24 24"><circle cx="12" cy="12" r="11" fill="#fff" fill-opacity=".35" stroke="#cbd3d9"/><path d="M7 9l5-2v10l-5-2z" fill="#dfd2ad"/><path d="M12 7l5 2v7l-5 1z" fill="#c5b68e"/><use href="#slash"/></svg></button>
                    <button class="size-[24px] p-[1px]" aria-label="Result"><svg viewBox="0 0 24 24"><circle cx="12" cy="12" r="11" fill="#fff" fill-opacity=".35" stroke="#cbd3d9"/><path d="M11 6h6v6h-6z" fill="#b5afd1"/><path d="M6.500 11.500h5v5h-5z" fill="#e2d8c5" stroke="#c2b69f"/></svg></button>
                    <button class="size-[24px] p-[1px] mb-[1px]" aria-label="Group"><svg viewBox="0 0 24 24"><circle cx="12" cy="12" r="11" fill="#fff" fill-opacity=".35" stroke="#cbd3d9"/><path d="M6 12h6v6H6z" fill="#dd8e8e"/><path d="M11.500 6.500h5v5h-5z" fill="#e2d8c5" stroke="#cdbd9b"/></svg></button>
                    <button class="size-[24px] p-[1px]" aria-label="Named"><svg viewBox="0 0 24 24"><circle cx="12" cy="12" r="11" fill="#fff" fill-opacity=".35" stroke="#cbd3d9"/><path d="M8 8v8M11 7.500h3v9h-3z" fill="none" stroke="#9ca1b8" stroke-dasharray="2 1"/></svg></button>
                    <button class="size-[24px] p-[1px]" aria-label="Color"><svg viewBox="0 0 24 24"><circle cx="12" cy="12" r="11" fill="#fff" fill-opacity=".35" stroke="#cbd3d9"/><path d="M8 9h2M11 9h2M14 9h2M9 12h2M13 12h3M11 15h2" stroke="#ac9ca8" stroke-width="2"/><use href="#slash"/></svg></button>
                    <button class="size-[24px] p-[1px]" aria-label="Level"><svg viewBox="0 0 24 24"><circle cx="12" cy="12" r="11" fill="#fff" fill-opacity=".35" stroke="#cbd7df"/><path d="M6 9l6-3 6 3-6 3zM6 12l6 3 6-3M6 15l6 3 6-3" fill="#a7c5dc" stroke="#a7c5dc" stroke-width="1.500"/><use href="#slash"/></svg></button>
                    <button class="size-[24px] p-[1px]" aria-label="Other"><svg viewBox="0 0 24 24"><circle cx="12" cy="12" r="11" fill="#fff" fill-opacity=".35" stroke="#cbdce5"/><circle cx="12" cy="12" r="3.500" fill="none" stroke="#e2d0b4" stroke-width="2"/><path d="M12 6v2M12 16v2M6 12h2M16 12h2M8 8l1 1M15 15l1 1M16 8l-1 1M9 15l-1 1" stroke="#e2d0b4" stroke-width="1.500"/><use href="#slash"/></svg></button>
                    <button class="size-[24px] p-[1px]" aria-label="Clear"><svg viewBox="0 0 24 24"><circle cx="12" cy="12" r="11" fill="#fff" fill-opacity=".35" stroke="#cbdce5"/><circle cx="12" cy="12" r="5" fill="none" stroke="#dda6a4" stroke-width="1.300"/><path d="M8.500 8.500l7 7" stroke="#dda6a4" stroke-width="1.300"/></svg></button>
                </div>

                <!-- view and plane pickers -->
                <div class="absolute left-[2px] bottom-[97px] flex flex-col gap-[3px] text-[#999] w-[66px]">
                    <div class="flex justify-between">
                        <button class="w-[24px] h-[15px] rounded-full border border-[#cdd3d6] flex items-center justify-between px-[2px]" aria-label="Add plane"><svg class="size-[9px]" viewBox="0 0 9 9"><path d="M0 4.500h9M4.500 0v9" stroke="#a3b8b0" stroke-width="2"/></svg><svg class="size-[6px]"><use href="#down"/></svg></button>
                        <button class="size-[15px] rounded-full border border-[#cdd3d6]">3D</button>
                        <button class="size-[15px] rounded-full border border-[#cdd3d6] flex items-center justify-center" aria-label="Collapse"><svg class="size-[7px]"><use href="#down"/></svg></button>
                    </div>
                    <button class="h-[15px] rounded-full border border-[#cdd3d6] flex items-center pl-[5px] pr-[3px]"><b class="font-semibold mr-[4px] text-[#888]">G:</b>Iso<svg class="size-[6px] ml-auto"><use href="#down"/></svg></button>
                    <button class="h-[15px] rounded-full border border-[#cdd3d6] flex items-center pl-[5px] pr-[3px]"><b class="font-semibold mr-[4px] text-[#888]">WCS:</b>Top<svg class="size-[6px] ml-auto"><use href="#down"/></svg></button>
                    <button class="h-[15px] rounded-full border border-[#cdd3d6] flex items-center pl-[5px] pr-[3px]"><b class="font-semibold mr-[4px] text-[#888]">C:</b>Top<svg class="size-[6px] ml-auto"><use href="#down"/></svg></button>
                    <button class="h-[15px] rounded-full border border-[#cdd3d6] flex items-center pl-[5px] pr-[3px]"><b class="font-semibold mr-[4px] text-[#888]">T:</b>Top<svg class="size-[6px] ml-auto"><use href="#down"/></svg></button>
                </div>

                <!-- view cube and axes -->
                <svg class="absolute left-0 bottom-0 w-[90px] h-[92px]" viewBox="0 0 90 92">
                    <path d="M31 21h33v35H31z" fill="#999"/><path d="M37 24h21l3 3v23l-3 3H37l-3-3V27z" fill="#c9c9c9"/>
                    <path d="M31 28h5l2-7M64 28h-5l-3-7M31 49h5l2 7M64 49h-5l-3 7" fill="none" stroke="#ccc"/>
                    <text x="47" y="42" text-anchor="middle" font-size="9" fill="#222">Top</text>
                    <path d="M28.500 58V18" stroke="#0c8a1c" stroke-width="2"/><path d="M26 20l2.500-5 2.500 5z" fill="#0c8a1c"/>
                    <path d="M28 58.500h37" stroke="#b30d12" stroke-width="2"/><path d="M64 56l6 2.500-6 2.500z" fill="#b30d12"/>
                    <text x="28" y="13" text-anchor="middle" font-size="9" font-weight="700" fill="#0c8a1c">Y</text>
                    <text x="72" y="61" font-size="9" font-weight="700" fill="#b30d12">X</text>
                    <g fill="#f1f1f1" stroke="#aaa"><rect x="2" y="35" width="11" height="33" rx="5.500"/><rect x="17.500" y="72.500" width="32" height="11" rx="5.500"/><circle cx="7.500" cy="78.500" r="5.500"/></g>
                    <g stroke="#999" stroke-width="1.500" fill="none"><path d="M7.500 39v11M5 42l2.500-3 2.500 3M7.500 53v11M5 61l2.500 3 2.500-3M21 78h11M24 75.500L21 78l3 2.500M35 78h11M43 75.500l3 2.500-3 2.500"/><path d="M4.500 79a3 3 0 016-1M10.500 79a3 3 0 01-6 1" stroke-width="1"/></g>
                    <text x="56" y="84" font-size="9" font-weight="700" fill="#111">Top</text>
                </svg>

                <div class="absolute right-[15px] bottom-[8px] w-[65px] h-[17px] border-x border-[#222] text-center text-black font-bold text-[9px] leading-[10px]"><div class="h-[10px] border-b border-[#222]">0.1664 in</div></div>
            </div>

            <div class="h-[18px] shrink-0 flex items-center bg-[#adadad] border-t-2 border-[#ccc] whitespace-nowrap">
                <a href="#" class="flex items-center gap-[3px] pl-1 w-[73px]"><svg class="w-[7px] h-[10px]" viewBox="0 0 7 10"><path d="M0 0h7v10L5 8 3 10V2H0z" fill="#3a78b5"/></svg>Main Viewsheet</a>
                <a href="#" class="w-[83px] h-[16px] pt-[3px] text-center bg-[#dcdcdc] border-x border-b border-[#444] font-bold text-black">Temporary Viewsheet</a>
                <button class="ml-[5px]" aria-label="Add viewsheet">+</button>
                <svg class="w-[20px] h-[8px] ml-auto" viewBox="0 0 20 8" fill="none" stroke="#333"><path d="M4 1.500v5L2 4zM13 1.500v5L15 4z"/></svg>
            </div>
        </section>
    </main>

    <footer class="shrink-0">
        <div class="h-[18px] bg-[#555] border-t border-[#666] text-[#e4e4e4] flex items-center justify-end whitespace-nowrap pr-[2px]">
            <span class="w-[79px]">SECTION VIEW: OFF</span>
            <span class="w-[115px]">SELECTED ENTITIES: 0</span>
            <span class="w-[12px]">X:</span><span class="w-[49px]">0.09819</span>
            <span class="w-[12px]">Y:</span><span class="w-[47px]">-0.15416</span>
            <span class="w-[13px]">Z:</span><span class="w-[42px]">0.00000</span>
            <span class="w-[19px]">3D</span>
            <span class="w-[58px]">CPLANE: Top</span>
            <span class="w-[57px]">TPLANE: Top</span>
            <span class="w-[50px]">WCS: Top</span>
            <svg class="w-[108px] h-[16px]" viewBox="0 0 108 16">
                <use href="#globe" x="1" y="2" width="12" height="12"/><use href="#globe" x="19" y="2" width="12" height="12"/><use href="#globe" x="38" y="2" width="12" height="12"/>
                <path d="M54 0h17v16H54z" fill="#333"/><circle cx="62.500" cy="8" r="4.500" fill="#ddd"/><circle cx="62" cy="7" r="2" fill="#fff"/>
                <circle cx="81" cy="8" r="4.500" fill="#ccc"/><circle cx="80" cy="7" r="2" fill="#fff"/>
                <circle cx="99" cy="8" r="4.500" fill="#999"/><path d="M95.500 11.500l7-7a5 5 0 00-7 7z" fill="#fff"/>
            </svg>
        </div>
        <div class="h-[5px] bg-[#dcdcdc]"></div>
    </footer>

    <script>
        document.getElementById('cutdia').select();
    </script>
</body>
</html>
